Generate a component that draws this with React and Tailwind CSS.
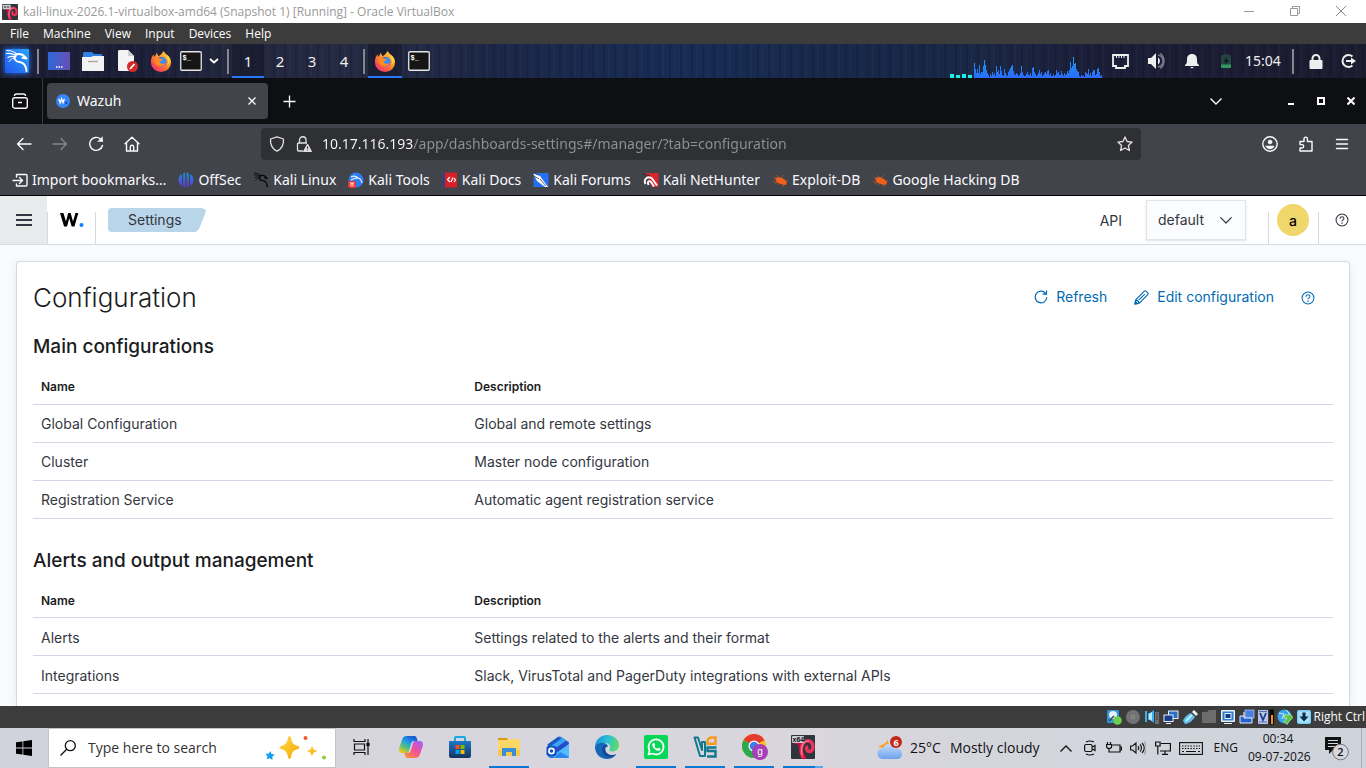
import React from 'react';

const WIN = "font-['Open_Sans',sans-serif]";
const KALI = "font-['Noto_Sans',sans-serif]";

/* ---------- Window chrome icons ---------- */

function VmIcon({ className, label }) {
  return (
    <svg viewBox="0 0 24 24" className={className} aria-hidden="true">
      <rect width="24" height="24" rx="1" fill="#30343d" />
      <path d="M3 8c4-4 7 2 7 7 0 4 2 8 5 8" fill="none" stroke="#b8123c" strokeWidth="4" />
      <path d="M12 23C8 12 12 5 18 6c5 1 5 10 1 10.500-3.500.5-4.500-4-2-5" fill="none" stroke="#e8335c" strokeWidth="3.400" />
      <path d="M11 20C9 12 13 5.500 18 6" fill="none" stroke="#ff8ca2" strokeWidth="1" />
      <rect x="1" y="1" width="12" height="7" rx="1" fill="#c9ccd1" />
      {label ? (
        <text x="1.5" y="7" fontSize="7" fontWeight="700" fontFamily="Liberation Sans" fill="#111">x64</text>
      ) : (
        <path d="M3 3l3 3m0-3L3 6m5-3v3m2-3v3" stroke="#444" strokeWidth="1" />
      )}
    </svg>
  );
}

function Dragon({ color }) {
  return (
    <g fill="none" stroke={color} strokeLinecap="round" strokeLinejoin="round">
      <path d="M2 1.500c4 0 7 1 9.500 3.500M1.500 4.500c4-.5 7 .5 9.500 2M3 8.500c2.500-1.500 5-1.500 8-.5" strokeWidth="1.200" />
      <path d="M11 5.500c3.500-1 6.500-.5 9 2.500l1.500 1.500-4-.8M11 6c-3 3.500-1 6.500 3.500 7 4.500.5 6.500 3.500 7 9" strokeWidth="1.900" />
      <path d="M4 12.500c1.500-2 3-3 5-3.500" strokeWidth="1" />
    </g>
  );
}

function KaliTile({ className }) {
  return (
    <svg viewBox="0 0 26 26" className={className} aria-hidden="true">
      <defs>
        <linearGradient id="kt" x1="0" y1="1" x2="1" y2="0">
          <stop offset="0" stopColor="#2357f0" />
          <stop offset="1" stopColor="#2ba4f8" />
        </linearGradient>
      </defs>
      <rect x="1" y="1" width="24" height="24" rx="1" fill="url(#kt)" />
      <g transform="translate(1 1)"><Dragon color="#fff" /></g>
    </svg>
  );
}

function FirefoxIcon({ className }) {
  return (
    <svg viewBox="0 0 24 24" className={className} aria-hidden="true">
      <defs>
        <linearGradient id="ffx" x1="1" y1="0" x2="0.200" y2="1">
          <stop offset="0" stopColor="#ffe14a" />
          <stop offset="0.450" stopColor="#ff9a2a" />
          <stop offset="0.800" stopColor="#ff4f4f" />
          <stop offset="1" stopColor="#e5317f" />
        </linearGradient>
      </defs>
      <path d="M15 1c1 2 2 3 4 4.500 2.500 2 4 4.500 4 8A11 10.500 0 0 1 1 13.500C1 9 2.500 6.500 4 5l.8 2.500L7.500 3l1.500 3.500C11.500 6 13 3.500 15 1z" fill="url(#ffx)" />
      <circle cx="12.500" cy="13" r="5.500" fill="#5a50dc" />
      <circle cx="13.500" cy="12" r="3.800" fill="#3f8ff5" />
      <path d="M5 9.500c2-1.500 4-1.500 6 0l2.500.7c-.5 1.500-2 1.800-3 2.300.5 3 4 3.500 7 1.500-1 4-5.500 5.500-9 3.500C5 15.500 4 12.500 5 9.500z" fill="#ff8a20" />
      <path d="M16 6c3 2 5 6 3 10 3-2 3.500-6.500.5-9.500z" fill="#ffd83c" />
    </svg>
  );
}

function TerminalIcon() {
  return (
    <svg viewBox="0 0 22 20" className="h-5 w-[22px]" aria-hidden="true">
      <rect x="0.750" y="0.750" width="20.500" height="18.500" rx="1" fill="#151515" stroke="#e6e6e6" strokeWidth="1.300" />
      <text x="2.500" y="9" fontSize="7" fontWeight="700" fontFamily="Liberation Mono" fill="#fff">$_</text>
    </svg>
  );
}

const CPU = [
  15, 9, 5, 9, 5, 13, 4, 6, 6, 12, 18, 13, 8, 5, 3, 1, 4, 2, 6, 3, 5, 2, 12, 6, 8, 4, 12, 7, 3, 2, 9, 5, 3, 2, 6,
  8, 10, 12, 13, 7, 4, 3, 5, 4, 2, 3, 5, 12, 6, 3, 2, 2, 4, 6, 3, 3, 5, 2, 10, 11, 6, 4, 2, 3, 5, 8, 4, 6, 2, 3, 5,
  6, 4, 7, 8, 3, 5, 2, 2, 4, 2, 3, 8, 5, 6, 3, 3, 7, 4, 2, 5, 3, 4, 7, 5, 8, 16, 10, 12, 21, 14, 15, 9, 7, 6, 2, 1,
  3, 2, 2, 1, 6, 5, 4, 9, 3, 5, 2, 6, 8, 8, 3, 4, 9, 10, 6, 2, 3,
];

function CpuGraph() {
  return (
    <svg viewBox="0 0 152 34" className="h-[34px] w-[152px] shrink-0" role="img" aria-label="CPU usage">
      <defs>
        <linearGradient id="cpu" gradientUnits="userSpaceOnUse" x1="0" y1="12" x2="0" y2="34">
          <stop offset="0" stopColor="#19a8e8" />
          <stop offset="0.700" stopColor="#2679f6" />
          <stop offset="1" stopColor="#2a6cff" />
        </linearGradient>
      </defs>
      {[0, 6, 12, 18].map((x, i) => (
        <rect key={x} x={x} y={i % 2 ? 31 : 30} width="4" height={i % 2 ? 3 : 4} fill="#18f0e4" />
      ))}
      {CPU.map((h, i) => (
        <rect key={i} x={24 + i} y={34 - h} width="1" height={h} fill="url(#cpu)" shapeRendering="crispEdges" />
      ))}
    </svg>
  );
}

const Sep = ({ className = 'w-2' }) => (
  <span className={`flex shrink-0 justify-center ${className}`}>
    <span className="h-[25px] w-0.5 bg-[#85868e]" />
  </span>
);

function TitleBar() {
  return (
    <div className={`flex h-[23px] shrink-0 items-center bg-white text-[#999] ${WIN}`}>
      <VmIcon className="ml-0.5 h-4 w-4" />
      <span className="ml-[5px] text-[12px] leading-4 whitespace-nowrap">
        kali-linux-2026.1-virtualbox-amd64 (Snapshot 1) [Running] - Oracle VirtualBox
      </span>
      <div className="mr-0.5 ml-auto flex h-full pb-0.5">
        <button aria-label="Minimize" className="flex w-[46px] items-center justify-center">
          <svg viewBox="0 0 10 10" className="h-2.5 w-2.5"><path d="M0 5.500h10" stroke="#999" /></svg>
        </button>
        <button aria-label="Restore" className="flex w-[46px] items-center justify-center">
          <svg viewBox="0 0 10 10" className="h-2.5 w-2.5" fill="none" stroke="#999"><path d="M.5 2.500h7v7h-7zM2.500 2V.5h7v7H8" /></svg>
        </button>
        <button aria-label="Close" className="flex w-[46px] items-center justify-center">
          <svg viewBox="0 0 10 10" className="h-2.5 w-2.5" stroke="#888"><path d="M0 0l10 10M10 0L0 10" /></svg>
        </button>
      </div>
    </div>
  );
}

function MenuBar() {
  return (
    <nav className={`flex h-[21px] shrink-0 items-center gap-3.5 bg-[#3c3c3d] pl-2.5 text-[12px] leading-4 text-white ${WIN}`}>
      {['File', 'Machine', 'View', 'Input', 'Devices', 'Help'].map((m) => (
        <button key={m}>{m}</button>
      ))}
    </nav>
  );
}

function PanelCell({ w, label, children, className = '' }) {
  return (
    <button aria-label={label} className={`flex h-full shrink-0 items-center justify-center ${w} ${className}`}>
      {children}
    </button>
  );
}

function KaliPanel() {
  return (
    <div
      className={`flex h-[34px] shrink-0 items-center bg-[repeating-linear-gradient(90deg,transparent_0_3px,rgba(60,110,130,0.10)_3px_4px,transparent_4px_9px,rgba(10,10,30,0.18)_9px_11px),linear-gradient(90deg,#1d1f33_0%,#1c1f38_10%,#23273d_16%,#252b44_28%,#1c2747_36%,#182c55_50%,#182849_62%,#1a2745_72%,#1c1e38_80%,#1c1c2f_100%)] text-[#eee] ${KALI}`}
    >
      <PanelCell w="w-[34px]" label="Applications"><KaliTile className="h-[26px] w-[26px] drop-shadow-[0_0_3px_#2777ff]" /></PanelCell>
      <Sep />
      <PanelCell w="w-[34px]" label="Show desktop">
        <svg viewBox="0 0 22 18" className="h-[18px] w-[22px]">
          <defs><linearGradient id="dsk"><stop stopColor="#3167d8" /><stop offset="1" stopColor="#6550b4" /></linearGradient></defs>
          <rect width="22" height="18" rx="1" fill="url(#dsk)" />
          <path d="M8 15h1.500m1 0h1.500m1 0h1.500" stroke="#fff" strokeWidth="1.500" />
        </svg>
      </PanelCell>
      <PanelCell w="w-[34px]" label="File manager">
        <svg viewBox="0 0 22 21" className="h-[21px] w-[22px]">
          <path d="M2 1h8l2 2h7a1 1 0 0 1 1 1v6H1V2z" fill="#3080e8" />
          <path d="M0 6h9l2-1h11v15H0z" fill="#f2f2f2" />
          <path d="M6 10.500h10" stroke="#aaa" strokeWidth="1.500" />
        </svg>
      </PanelCell>
      <PanelCell w="w-[34px]" label="Text editor">
        <svg viewBox="0 0 22 22" className="h-[22px] w-[22px]">
          <path d="M3 0h9l6 6v15H3a1 1 0 0 1-1-1V1z" fill="#f4f4f4" />
          <path d="M12 0l6 6h-6z" fill="#cfcfcf" />
          <circle cx="16.500" cy="16.500" r="5.500" fill="#d42a2a" />
          <path d="M14 19l4.500-5" stroke="#fff" strokeWidth="1.800" />
        </svg>
      </PanelCell>
      <PanelCell w="w-[34px]" label="Firefox"><FirefoxIcon className="h-[22px] w-[22px]" /></PanelCell>
      <PanelCell w="w-[26px]" label="Terminal"><TerminalIcon /></PanelCell>
      <PanelCell w="w-5" label="More terminals">
        <svg viewBox="0 0 10 6" className="h-1.5 w-2.5" fill="none" stroke="#fff" strokeWidth="1.800"><path d="M1 1l4 3.500L9 1" /></svg>
      </PanelCell>
      <Sep />
      {['1', '2', '3', '4'].map((n) => (
        <button
          key={n}
          className={n === '1'
            ? 'h-full w-8 border-b-2 border-[#2777ff] bg-[#15182a]/60 pt-0.5 text-[15px]'
            : 'h-full w-8 border-b-2 border-transparent pt-0.5 text-[15px]'}
        >
          {n}
        </button>
      ))}
      <Sep />
      <PanelCell w="w-[34px]" label="Firefox window" className="border-b-2 border-[#2777ff] bg-[#15182a]/60 pt-0.5"><FirefoxIcon className="h-[22px] w-[22px]" /></PanelCell>
      <PanelCell w="w-[34px]" label="Terminal window"><TerminalIcon /></PanelCell>

      <div className="ml-auto flex h-full items-center">
        <CpuGraph />
        <PanelCell w="w-9" label="Network">
          <svg viewBox="0 0 17 15" className="h-[15px] w-[17px]" fill="none" stroke="#eee" strokeWidth="1.800">
            <path d="M1 1h15v11h-3v2H4v-2H1z" /><path d="M4.500 2v2M7 2v2M9.500 2v2M12 2v2" strokeWidth="1" />
          </svg>
        </PanelCell>
        <PanelCell w="w-9" label="Volume">
          <svg viewBox="0 0 17 16" className="h-4 w-[17px]">
            <path d="M0 5h3l5-5v16l-5-5H0z" fill="#eee" /><path d="M10 4.500c2.500 1.500 2.500 5.500 0 7z" fill="#eee" />
            <path d="M10 2c4 1 5 4 5 6s-1 5-5 6M12 .5c3 2 4 4.500 4 7.500s-1 5.500-4 7.500" fill="none" stroke="#777986" strokeWidth="1.500" />
          </svg>
        </PanelCell>
        <PanelCell w="w-9" label="Notifications">
          <svg viewBox="0 0 14 16" className="h-4 w-3.5" fill="#eee">
            <path d="M7 1c3.500 0 5 2.500 5 5 0 4 .5 5 2 6v1H0v-1c1.500-1 2-2 2-6 0-2.500 1.500-5 5-5zM5 14h4l-2 1.500z" />
          </svg>
        </PanelCell>
        <PanelCell w="w-8" label="Battery">
          <svg viewBox="0 0 10 14" className="h-3.5 w-2.5">
            <path d="M3 0h4v1h2a1 1 0 0 1 1 1v9H0V2a1 1 0 0 1 1-1h2z" fill="#24443f" />
            <path d="M0 10.500h10V13a1 1 0 0 1-1 1H1a1 1 0 0 1-1-1z" fill="#2f9a62" /><path d="M6 3L2.500 7.500H5L4 11l4-5H5.500z" fill="#10181c" />
          </svg>
        </PanelCell>
        <span className="w-[42px] text-center text-[14px] leading-5">15:04</span>
        <Sep className="w-[18px]" />
        <PanelCell w="w-7" label="Lock screen">
          <svg viewBox="0 0 14 15" className="h-[15px] w-3.5"><path d="M3.500 7V4.500a3.500 3.500 0 0 1 7 0V7" fill="none" stroke="#eee" strokeWidth="2" /><rect x="0.500" y="6" width="13" height="9" rx="1" fill="#eee" /></svg>
        </PanelCell>
        <PanelCell w="w-9" label="Log out">
          <svg viewBox="0 0 16 16" className="h-4 w-4"><path d="M12.500 3.500a6 6 0 1 0 0 9" fill="none" stroke="#eee" strokeWidth="2" /><path d="M6 8h6" stroke="#eee" strokeWidth="2" /><path d="M11 4.500L16 8l-5 3.500z" fill="#eee" /></svg>
        </PanelCell>
      </div>
    </div>
  );
}

/* ---------- Firefox ---------- */

function TabBar() {
  return (
    <div className="flex h-[46px] shrink-0 items-center bg-[#0e0f13] text-[#fbfbfe]">
      <button aria-label="Recent browsing" className="flex h-full w-[43px] items-center justify-center border-r border-[#3a3b40] pr-0.5">
        <svg viewBox="0 0 16 16" className="h-4 w-4" fill="none" stroke="#f4f4f6" strokeWidth="1.400">
          <rect x="0.700" y="4.700" width="14.600" height="10.500" rx="2" /><path d="M2.500 3c0-1.500.5-2 2-2h7c1.500 0 2 .5 2 2M6 9.500h4" />
        </svg>
      </button>
      <div className="ml-1 flex h-9 w-[221px] items-center rounded bg-[#42444c] pl-[9px]">
        <svg viewBox="0 0 14 14" className="h-3.5 w-3.5">
          <circle cx="7" cy="7" r="7" fill="#3585f9" />
          <path d="M2.800 4.800l1.400 4 1.400-4 1.400 4 1.400-4" fill="none" stroke="#fff" strokeWidth="1.300" /><circle cx="10.500" cy="8.800" r="0.900" fill="#0a2a60" />
        </svg>
        <span className={`ml-[7px] text-[14px] leading-5 ${KALI}`}>Wazuh</span>
        <button aria-label="Close tab" className="mr-[11px] ml-auto flex h-5 w-2.5 items-center">
          <svg viewBox="0 0 8 8" className="mx-auto h-2 w-2" stroke="#fbfbfe" strokeWidth="1.300"><path d="M.5.5l7 7m0-7l-7 7" /></svg>
        </button>
      </div>
      <button aria-label="New tab" className="ml-[15px]">
        <svg viewBox="0 0 13 13" className="h-[13px] w-[13px]" stroke="#fbfbfe" strokeWidth="1.300"><path d="M6.500.5v12M.5 6.500h12" /></svg>
      </button>
      <div className="ml-auto flex items-center">
        <button aria-label="List all tabs" className="mr-[54px]">
          <svg viewBox="0 0 12 7" className="h-[7px] w-3" fill="none" stroke="#fbfbfe" strokeWidth="1.400"><path d="M.5.5L6 6 11.500.5" /></svg>
        </button>
        <button aria-label="Minimize window" className="flex w-[30px] justify-center"><svg viewBox="0 0 8 8" className="h-2 w-2"><path d="M1 7h6" stroke="#fff" strokeWidth="2" /></svg></button>
        <button aria-label="Maximize window" className="flex w-[30px] justify-center"><svg viewBox="0 0 8 8" className="h-2 w-2"><rect x="1" y="1" width="6" height="6" fill="none" stroke="#fff" strokeWidth="2" /></svg></button>
        <button aria-label="Close window" className="flex w-[30px] justify-center"><svg viewBox="0 0 8 8" className="h-2 w-2" stroke="#fff" strokeWidth="2"><path d="M.5.5l7 7m0-7l-7 7" /></svg></button>
      </div>
    </div>
  );
}

function ToolButton({ label, children, dim }) {
  return (
    <button aria-label={label} className={`flex w-9 items-center justify-center ${dim ? 'text-[#85868c]' : 'text-[#fbfbfe]'}`}>
      <svg viewBox="0 0 16 16" className="h-4 w-4" fill="none" stroke="currentColor" strokeWidth="1.400" strokeLinejoin="round" strokeLinecap="round">{children}</svg>
    </button>
  );
}

function NavToolbar() {
  return (
    <div className={`flex h-10 shrink-0 items-center bg-[#42444c] px-1.5 ${KALI}`}>
      <ToolButton label="Back"><path d="M15 8H1.500M7 2.500L1.500 8 7 13.500" /></ToolButton>
      <ToolButton label="Forward" dim><path d="M1 8h13.500M9 2.500L14.500 8 9 13.500" /></ToolButton>
      <ToolButton label="Reload"><path d="M14.500 9.500A6.500 6.500 0 1 1 12.500 3l2 2" /><path d="M14.500 1v4.500H10z" fill="currentColor" strokeWidth="0.500" /></ToolButton>
      <ToolButton label="Home"><path d="M1 7.800L8 1.200l7 6.600M2.500 7v8h11V7M6.300 15v-4a1.700 1.700 0 0 1 3.400 0v4" /></ToolButton>
      <div className="mx-[111px] flex h-8 flex-1 items-center rounded bg-[#2f3034] pl-2">
        <svg viewBox="0 0 16 16" className="h-4 w-4" fill="none" stroke="#e2e2e6" strokeWidth="1.300" strokeLinejoin="round"><path d="M8 .8L14.500 3c.3 5-1 9.500-6.500 12.200C2.500 12.500 1.200 8 1.500 3z" /></svg>
        <svg viewBox="0 0 16 16" className="ml-[11px] h-4 w-4" fill="none" stroke="#e2e2e6" strokeWidth="1.300" strokeLinejoin="round">
          <path d="M3.500 7V4a3 3 0 0 1 6.500 0v3M7 15H2.500a1 1 0 0 1-1-1V8a1 1 0 0 1 1-1H11" />
          <path d="M11.500 8l4 7.500h-8z" fill="#e2e2e6" strokeWidth="1" /><path d="M11.500 10.500v2.300m0 .9v.8" stroke="#2f3034" strokeWidth="1.200" />
        </svg>
        <input
          aria-label="Address"
          readOnly
          value="10.17.116.193/app/dashboards-settings#/manager/?tab=configuration"
          className="ml-2.5 min-w-0 flex-1 bg-[linear-gradient(90deg,#fbfbfe_91px,#909196_91px)] bg-clip-text text-[14px] leading-6 text-transparent outline-none"
        />
        <button aria-label="Bookmark this page" className="mr-2">
          <svg viewBox="0 0 16 16" className="h-4 w-4" fill="none" stroke="#e2e2e6" strokeWidth="1.300" strokeLinejoin="round"><path d="M8 .9l2.100 4.600 5 .6-3.700 3.400 1 5L8 12l-4.400 2.500 1-5L.9 6.100l5-.6z" /></svg>
        </button>
      </div>
      <ToolButton label="Account"><circle cx="8" cy="8" r="7.200" /><circle cx="8" cy="6" r="2" fill="currentColor" strokeWidth="0.500" /><path d="M4 10h8c-.5 2-2 3-4 3s-3.500-1-4-3z" fill="currentColor" strokeWidth="0.500" /></ToolButton>
      <ToolButton label="Extensions"><path d="M2 5.500h4V2.800a1.700 1.700 0 0 1 3.400 0v2.700H14V15H2v-3h2a1.600 1.600 0 0 0 0-3.400H2z" /></ToolButton>
      <ToolButton label="Menu"><path d="M2.500 3.500h11M2.500 8h11M2.500 12.500h11" /></ToolButton>
    </div>
  );
}

const Bug = () => (
  <svg viewBox="0 0 16 16" className="h-4 w-4">
    <g fill="none" stroke="#b8501c" strokeWidth="0.900"><path d="M2 5.500l4 2M5 3l2 4M10 5l2-2M1 10l5-1M6 13l2-2M11 13l1 2M13 9l3 0M3 12l3-2" /></g>
    <path d="M3 6l5-1 4 2 3 3-1 3-4-.5-5-2z" fill="#ef5f1d" />
  </svg>
);

const BOOKMARKS = [
  ['Import bookmarks…', <svg key="i" viewBox="0 0 16 16" className="h-4 w-4" fill="none" stroke="#fbfbfe" strokeWidth="1.400" strokeLinecap="round" strokeLinejoin="round"><path d="M1 8.500h9M7.500 5.500l3 3-3 3M4.500 5V2.500H14a1 1 0 0 1 1 1V13a1 1 0 0 1-1 1H4.500V12" /></svg>],
  ['OffSec', <svg key="o" viewBox="0 0 16 16" className="h-4 w-4"><defs><linearGradient id="ofs" x1="0" y1="0" x2="0" y2="1"><stop stopColor="#1d8fc8" /><stop offset="0.500" stopColor="#3c62d8" /><stop offset="1" stopColor="#6a2fd0" /></linearGradient></defs><path d="M7.300.5v15c-1.200 0-2.200-.6-2.200-2V2.500c0-1.400 1-2 2.200-2zM8.700.5v15c1.200 0 2.200-.6 2.200-2V2.500c0-1.400-1-2-2.200-2zM4 2v12C2 13 .5 11 .5 8S2 3 4 2zM12 2v12c2-1 3.500-3 3.500-6S14 3 12 2z" fill="url(#ofs)" /></svg>],
  ['Kali Linux', <svg key="k" viewBox="0 0 24 24" className="h-4 w-4"><Dragon color="#08080a" /></svg>],
  ['Kali Tools', <svg key="t" viewBox="0 0 16 16" className="h-4 w-4"><circle cx="8" cy="8" r="7.500" fill="#2f7cf0" /><path d="M3 5c3-1.500 5-1 7 1 3 .5 3.500 3 4 5M3 8c3-2 5-2 7-2" fill="none" stroke="#e8f0ff" strokeWidth="1.200" /><rect x="0" y="9" width="8" height="7" rx="2" fill="#e33" /><path d="M2 11h4M3 11v3.500M5 11v3.500" stroke="#fff" strokeWidth="0.900" /></svg>],
  ['Kali Docs', <svg key="d" viewBox="0 0 16 16" className="h-4 w-4"><rect x="1" y="0.500" width="14" height="15" fill="#d81f26" /><path d="M1 .5h2v15H1z" fill="#2a3f8f" /><path d="M8 5L5.500 7.500 8 10M11 5.500L9 10M12 6l1.500 2-1.500 2" fill="none" stroke="#fff" strokeWidth="1.200" /></svg>],
  ['Kali Forums', <svg key="f" viewBox="0 0 16 16" className="h-4 w-4"><rect x="0.500" y="1" width="15" height="14" fill="#2470f2" /><path d="M0 1l7 3 8 11h-3L4 9z" fill="#fff" /><path d="M0 1l6 2M1 4l5 3M7 7l6 7" stroke="#223" strokeWidth="0.700" /></svg>],
  ['Kali NetHunter', <svg key="n" viewBox="0 0 16 16" className="h-4 w-4"><path d="M2 1h13.500v14H9z" fill="#d9262e" /><path d="M2.500 12C0 7 5 3.500 9 6.500l5 7M5.500 13C4 9.500 6 8 8 10l3 4.500" fill="none" stroke="#fff" strokeWidth="1.900" /><path d="M0 2l7 2" stroke="#222" strokeWidth="0.900" /></svg>],
  ['Exploit-DB', <Bug key="e" />],
  ['Google Hacking DB', <Bug key="g" />],
];

function BookmarksBar() {
  return (
    <div className={`flex h-8 shrink-0 items-center gap-3 border-b border-black bg-[#42444c] pl-3 text-[14px] leading-5 text-[#fbfbfe] ${KALI}`}>
      {BOOKMARKS.map(([name, icon]) => (
        <a key={name} href="#" className="flex items-center gap-1 whitespace-nowrap">{icon}<span>{name}</span></a>
      ))}
    </div>
  );
}

/* ---------- Wazuh dashboard ---------- */

function HelpIcon() {
  return (
    <svg viewBox="0 0 16 16" className="h-3.5 w-3.5" fill="none" stroke="currentColor" strokeWidth="1.200">
      <circle cx="8" cy="8" r="6.800" /><path d="M5.800 6.500c0-1.500 1-2.200 2.200-2.200s2.200.7 2.200 2c0 1.700-2.200 1.500-2.200 3.200" /><path d="M8 10.800v1.400" strokeWidth="1.500" />
    </svg>
  );
}

const Rule = () => <span className="h-8 w-px shrink-0 self-end bg-[#d3dae6]" />;

function AppHeader() {
  return (
    <header className="flex h-[49px] shrink-0 items-center border-b border-[#d3dae6] bg-white text-[#343741]">
      <button aria-label="Toggle navigation" className="flex h-full w-[47px] items-center justify-center bg-[#e9eaec]">
        <svg viewBox="0 0 16 12" className="h-3 w-4" stroke="#343741" strokeWidth="1.800"><path d="M0 1h16M0 6h16M0 11h16" /></svg>
      </button>
      <Rule />
      <a href="#" aria-label="Wazuh home" className="flex w-[47px] items-center justify-center">
        <svg viewBox="0 0 24 14" className="h-3.5 w-6">
          <path d="M0 0h3.600l2.700 8.600L8.600 0h2.600l2.500 8.600L16.300 0h3L15.200 13.500h-2.900L9.800 5.200 7.400 13.500H4.300z" fill="#000" transform="scale(.95 1)" />
          <circle cx="21.500" cy="12" r="2" fill="#0a80ff" />
        </svg>
      </a>
      <Rule />
      <span className="ml-3 flex h-6 w-[98px] items-center rounded-l-[4px] bg-[#b8d5e9] pb-px pl-5 text-[14px] [clip-path:polygon(0_0,94px_0,98px_2px,97px_6px,91px_21px,88px_24px,0_24px)]">Settings</span>
      <label htmlFor="api" className="mr-6 ml-auto text-[14px]">API</label>
      <div className="relative mr-[22px]">
        <select id="api" className="h-10 w-[100px] appearance-none border border-[#e0e5ee] bg-[#fbfcfd] pb-px pl-[11px] text-[14px] shadow-[0_1px_2px_rgba(130,140,170,0.25)] outline-none">
          <option>default</option>
        </select>
        <svg viewBox="0 0 12 7" className="pointer-events-none absolute top-[17px] right-[14px] h-[7px] w-3" fill="none" stroke="#343741" strokeWidth="1.200" strokeLinecap="round" strokeLinejoin="round"><path d="M.7.7L6 6 11.300.7" /></svg>
      </div>
      <Rule />
      <button aria-label="Account" className="mx-2 flex h-8 w-8 items-center justify-center rounded-full bg-[#f0d76b] text-[14px] font-medium text-black">a</button>
      <span className="w-px" />
      <Rule />
      <button aria-label="Help" className="flex w-[47px] items-center justify-center pr-px"><HelpIcon /></button>
    </header>
  );
}

function ConfigSection({ title, rows }) {
  return (
    <section>
      <h2 className="mb-3 text-[19px] leading-6 font-medium text-[#1a1c21]">{title}</h2>
      <table className="w-full border-collapse text-left text-[14px] leading-5 text-[#343741]">
        <thead>
          <tr className="h-[33px] border-b border-[#d3d6e4] text-[12px] text-[#1a1c21]">
            <th className="w-1/3 px-2 font-semibold">Name</th>
            <th className="px-2 font-semibold">Description</th>
          </tr>
        </thead>
        <tbody>
          {rows.map(([name, description]) => (
            <tr key={name} className="h-[38px] border-b border-[#d3d6e4]">
              <td className="px-2 pt-0.5">{name}</td>
              <td className="px-2 pt-0.5">{description}</td>
            </tr>
          ))}
        </tbody>
      </table>
    </section>
  );
}

function Dashboard() {
  return (
    <div className="flex min-h-0 flex-1 flex-col overflow-hidden bg-[#fafbfd] font-[Inter,sans-serif]">
      <AppHeader />
      <main className="mx-4 mt-4 flex-1 rounded-t border border-b-0 border-[#d3dae6] bg-white px-4 pt-4 shadow-[0_2px_8px_rgba(100,110,140,0.12)]">
        <div className="mb-[17px] flex h-10 items-center text-[14px] leading-5 text-[#006bb4]">
          <h1 className="text-[26px] leading-10 font-light text-[#1a1c21]">Configuration</h1>
          <button className="ml-auto flex items-center gap-2 pb-0.5">
            <svg viewBox="0 0 14 14" className="h-3.5 w-3.5" fill="none" stroke="currentColor" strokeWidth="1.200" strokeLinecap="round"><path d="M12.800 7.500A5.800 5.800 0 1 1 11.500 3.300M12.500.8v3.400H9" /></svg>
            Refresh
          </button>
          <button className="ml-[27px] flex items-center gap-2 pb-0.5">
            <svg viewBox="0 0 16 16" className="h-[15px] w-[15px]" fill="none" stroke="currentColor" strokeWidth="1.200" strokeLinejoin="round"><path d="M1 15l.8-4.500L11 1.300c.6-.6 1.400-.5 2 .1l1.600 1.600c.6.6.6 1.300 0 1.900L5.500 14.200zM1.800 10.500c1.800.3 3.300 1.900 3.700 3.700M5 10.800l6.500-6.500" /><path d="M1 15l.5-2.800 2.300 2.300z" fill="currentColor" /></svg>
            Edit configuration
          </button>
          <button aria-label="Help" className="mr-[18px] ml-[27px]"><HelpIcon /></button>
        </div>
        <div className="flex flex-col gap-[30px]">
          <ConfigSection
            title="Main configurations"
            rows={[
              ['Global Configuration', 'Global and remote settings'],
              ['Cluster', 'Master node configuration'],
              ['Registration Service', 'Automatic agent registration service'],
            ]}
          />
          <ConfigSection
            title="Alerts and output management"
            rows={[
              ['Alerts', 'Settings related to the alerts and their format'],
              ['Integrations', 'Slack, VirusTotal and PagerDuty integrations with external APIs'],
            ]}
          />
        </div>
      </main>
    </div>
  );
}

/* ---------- VirtualBox status bar ---------- */

const STATUS_ICONS = [
  <g key="1"><rect x="1" y="1" width="12" height="13" rx="1" fill="#2f96dc" /><circle cx="7" cy="6" r="4" fill="#e4f3fc" /><path d="M3 12l5-5" stroke="#345" strokeWidth="1.500" /><circle cx="11.500" cy="11.500" r="4.300" fill="#6cd04a" /></g>,
  <g key="2"><circle cx="8" cy="8" r="7" fill="#737374" /><circle cx="8" cy="8" r="2" fill="#9a9a9a" /><circle cx="8" cy="8" r="0.800" fill="#3c3c3d" /></g>,
  <g key="3"><path d="M1 2h2v11H1zM4 4h2l4-3v13l-4-3H4z" fill="#3cb0ee" /><path d="M5 5l3-2v9L5 10z" fill="#bfe6fb" /><path d="M11 3h4v12h-4z" fill="#6c7175" /><path d="M12 5h2M12 7.500h2M12 10h2" stroke="#3c3c3d" /></g>,
  <g key="4"><rect x="5.500" y="2" width="9.500" height="7.500" fill="#2d6fc0" stroke="#e4edf8" /><rect x="1" y="6" width="9" height="6.500" fill="#173d88" stroke="#e4edf8" /><path d="M3 14.500h5" stroke="#e4edf8" /></g>,
  <g key="5"><path d="M1 12c1-4 5-7 8-8l4 4c-2 3-6 7-10 7z" fill="#5fc0f3" /><path d="M4 12l6-6" stroke="#e8f7ff" strokeWidth="1.500" /><path d="M10 3l2-2 4 4-2 2z" fill="#f2f2f2" /></g>,
  <g key="6"><path d="M1 3h5l2-2h7v13H1z" fill="#6c6c6d" /></g>,
  <g key="7"><rect x="1" y="1" width="14" height="12" rx="1" fill="#e6f2fc" /><rect x="2.500" y="2.500" width="11" height="9" fill="#2b7bc8" /><rect x="5" y="4.500" width="6" height="5" fill="#0f3c80" stroke="#e6f2fc" /><path d="M4 14.500h8" stroke="#e6f2fc" /></g>,
  <g key="8"><rect x="6" y="1" width="9" height="8" fill="#4a80e0" stroke="#bcd2fa" strokeWidth="0.700" /><path d="M1 7h4v2h8v5H1z" fill="#2560d0" stroke="#e4edfb" /><path d="M5 3v5" stroke="#fff" /></g>,
  <g key="9"><rect x="0" y="1" width="10" height="14" rx="1" fill="#b9c6e6" /><path d="M2 4l3 7 3-7" fill="none" stroke="#1d3c90" strokeWidth="1.800" /><path d="M1 13h8M1 2.500h8" stroke="#3c54b0" strokeWidth="0.800" /><rect x="11.500" y="0.500" width="4.500" height="15" fill="#0b0b0b" /><rect x="13" y="6" width="2" height="9" fill="#ff8a1c" /></g>,
  <g key="10"><circle cx="7.500" cy="7.500" r="7" fill="#3aa5e8" /><path d="M2 4l5 1-2 5M9 1l3 3" stroke="#cdeafc" fill="none" /><path d="M7 6h5v-2l4 4.500-4 4-2 3-3-3 3-3.500H7z" fill="#5cc63c" stroke="#e9ffe0" strokeWidth="0.600" /></g>,
  <g key="11"><rect x="1" y="1" width="14" height="14" rx="2" fill="#7cd0f8" /><rect x="2.500" y="2.500" width="11" height="11" rx="1" fill="#a8e0fb" /><path d="M6.500 3.500h3v4h3L8 12.500 3.500 7.500h3z" fill="#0c2c4c" /></g>,
];

function StatusBar() {
  return (
    <div className={`flex h-[22px] shrink-0 items-center justify-end bg-[#3c3c3d] pr-px text-white ${WIN}`}>
      <div className="mr-0.5 flex gap-[3px]">
        {STATUS_ICONS.map((icon, i) => (
          <svg key={i} viewBox="0 0 16 16" className="h-4 w-4">{icon}</svg>
        ))}
      </div>
      <span className="text-[12px] leading-4 whitespace-nowrap">Right Ctrl</span>
    </div>
  );
}

/* ---------- Windows taskbar ---------- */

const APPS = [
  ['Task View', 'none', <svg key="a" viewBox="0 0 18 16" className="h-4 w-[18px]" fill="none" stroke="#111" strokeWidth="1.200"><path d="M1 0v2.500h11V0M1 16v-2.500h11V16M1.500 5h10v6h-10zM15 0v4M15 7v9" /><rect x="14" y="4.500" width="2" height="2" fill="#111" /></svg>],
  ['Copilot', 'none', (
    <svg key="b" viewBox="0 0 24 22" className="h-[22px] w-6">
      <defs>
        <linearGradient id="cp1" x1="0.800" y1="0" x2="0.200" y2="1"><stop stopColor="#1b4fd0" /><stop offset="0.400" stopColor="#1c9be6" /><stop offset="0.700" stopColor="#5bc27a" /><stop offset="1" stopColor="#f2c714" /></linearGradient>
        <linearGradient id="cp2" x1="0.800" y1="0" x2="0.200" y2="1"><stop stopColor="#a860f0" /><stop offset="0.500" stopColor="#f0509a" /><stop offset="1" stopColor="#ff8a3c" /></linearGradient>
      </defs>
      <path d="M8 0h7c2 0 2.500 1 3 3l.6 2H15c-2 0-2.500 1.500-3 3l-2 7c-.5 1.500-1 2-2.500 2H3c-3 0-3.500-3-2.500-6L3 4c.8-2.500 2-4 5-4z" fill="url(#cp1)" />
      <path d="M16 22H9c-2 0-2.500-1-3-3l-.6-2H9c2 0 2.500-1.500 3-3l2-7c.5-1.500 1-2 2.500-2H21c3 0 3.500 3 2.500 6L21 18c-.8 2.500-2 4-5 4z" fill="url(#cp2)" />
    </svg>
  )],
  ['Microsoft Store', 'none', <svg key="c" viewBox="0 0 24 24" className="h-6 w-6"><defs><linearGradient id="st" x1="0" y1="0" x2="0" y2="1"><stop stopColor="#1c78c8" /><stop offset="1" stopColor="#17335f" /></linearGradient></defs><path d="M7 7V3a1 1 0 0 1 1-1h8a1 1 0 0 1 1 1v4" fill="none" stroke="#1aa8e4" strokeWidth="2" /><path d="M1 6h22v15a2 2 0 0 1-2 2H3a2 2 0 0 1-2-2z" fill="url(#st)" /><path d="M7.500 10h4v4h-4z" fill="#f25022" /><path d="M12.500 10h4v4h-4z" fill="#7fba00" /><path d="M7.500 15h4v4h-4z" fill="#00a4ef" /><path d="M12.500 15h4v4h-4z" fill="#ffb900" /></svg>],
  ['File Explorer', 'full', <svg key="d" viewBox="0 0 24 22" className="h-[22px] w-6"><path d="M1 2h9l1 2H1z" fill="#d99a10" /><path d="M1 4h9l2-1h10a1 1 0 0 1 1 1v15H1z" fill="#fcd667" /><path d="M1 14h22v6H1z" fill="#f8c84c" /><path d="M5 12h14v8h-4v-4H9v4H5z" fill="#3a8fd4" /></svg>],
  ['Outlook', 'none', <svg key="e" viewBox="0 0 24 24" className="h-6 w-6"><path d="M2 9L12 2c1-.6 2-.6 3 0l8 5v14a2 2 0 0 1-2 2H5a3 3 0 0 1-3-3z" fill="#2878e0" /><path d="M1 10L12 2l4 2L4 12z" fill="#1c58c4" /><path d="M4 12L16 3l4 2.500L7 15z" fill="#3ba4f4" /><path d="M7 15L20 6l3 3-14 9z" fill="#2a48c8" /><path d="M8 20L23 9v12a2 2 0 0 1-2 2H8z" fill="#52bdfa" /><path d="M14 17l9 5a2 2 0 0 1-2 1H8z" fill="#2c84ee" /><rect x="0.500" y="11" width="10" height="10" rx="2" fill="#124fc0" /><circle cx="5.500" cy="16" r="2.600" fill="none" stroke="#fff" strokeWidth="1.600" /></svg>],
  ['Edge', 'none', (
    <svg key="f" viewBox="0 0 24 24" className="h-6 w-6">
      <defs><linearGradient id="eg" x1="0" y1="0.300" x2="1" y2="0.500"><stop stopColor="#1a8fd8" /><stop offset="0.500" stopColor="#2cc0d8" /><stop offset="1" stopColor="#5fdc62" /></linearGradient></defs>
      <path d="M0 12C0 5 5.500 0 12 0s12 4.500 12 10c0 4-3 6.500-6.500 6.500-2.500 0-3.500-1-3-2 1-1.500 1.500-5.500-3.500-6.500C6 7.500 1 9 0 12z" fill="url(#eg)" />
      <path d="M0 12c1-3 5-5 9-4 2.500.6 4 2 4 4 0-1-6 1-3.500 6 2 4 7 4.500 12 1-2 3-5.500 5-9.500 5C5 24 0 18.500 0 12z" fill="#1568b8" />
      <path d="M9.500 10C6 12 6 19 11.500 21.500c4 1.500 7.500.5 10-2.500-5 2.500-10 .5-11-3.500-.5-2 0-3.500 1-4.500z" fill="#144a94" />
    </svg>
  )],
  ['WhatsApp', 'full', <svg key="g" viewBox="0 0 24 24" className="h-6 w-6"><rect width="24" height="24" rx="2" fill="#07d757" /><path d="M4.500 19.500l1-4A7.500 7.500 0 1 1 8.500 18.500z" fill="none" stroke="#fff" strokeWidth="1.700" strokeLinejoin="round" /><path d="M9 8l1.200-.3 1 2.300-.8 1.200c.8 1.300 1.600 2 3 2.600l1-1 2.200 1c0 1.500-1.400 2.200-2.600 2C11 15.200 8.500 12.500 8.200 10c0-.8.300-1.500.8-2z" fill="#fff" /></svg>],
  ['VirtualBox', 'full', <svg key="h" viewBox="0 0 24 22" className="h-[22px] w-6" fill="none"><path d="M1.500 1.500h3.500l4 12.500V6h3v14H7z" stroke="#117a8c" strokeWidth="2" strokeLinejoin="round" /><path d="M14.500 7.800V6c0-3 1.500-4.500 4-4.500h4v6.300z" stroke="#f59a1c" strokeWidth="2.400" /><path d="M23.500 11.500h-9v3.500h8v5.500h-8.500" stroke="#117a8c" strokeWidth="2.400" /></svg>],
  ['Chrome', 'full', (
    <svg key="i" viewBox="0 0 26 26" className="ml-0.5 h-[26px] w-[26px]">
      <circle cx="12" cy="12" r="12" fill="#fbc116" /><path d="M12 12L1.600 6A12 12 0 0 1 22.400 6z" fill="#e33b2e" /><path d="M1.600 6L12 12v12A12 12 0 0 1 1.600 6z" fill="#2da94f" /><path d="M12 6.500h10.700L22.400 6z" fill="#e33b2e" />
      <circle cx="12" cy="12" r="5.500" fill="#fff" /><circle cx="12" cy="12" r="4.300" fill="#3b7ded" />
      <circle cx="18" cy="18" r="8" fill="#a43fb5" /><text x="18" y="21" textAnchor="middle" fontSize="10" fontFamily="Liberation Sans" fill="#fff">g</text>
    </svg>
  )],
  ['Kali VM', 'split', <VmIcon key="j" label className="h-6 w-6" />],
];

function Taskbar() {
  return (
    <footer className={`flex h-10 shrink-0 bg-[linear-gradient(90deg,#d0d2dc,#d7d5dd_30%,#d9d6dd_60%,#d2d5dd_80%,#cdd3da)] text-[#111] ${WIN}`}>
      <button aria-label="Start" className="flex w-12 shrink-0 items-center justify-center">
        <svg viewBox="0 0 16 16" className="h-4 w-4" fill="#000"><path d="M0 2.300L6.500 1.400v6.200H0zM7.300 1.300L16 0v7.600H7.300zM0 8.400h6.500v6.200L0 13.700zM7.300 8.400H16V16l-8.700-1.300z" /></svg>
      </button>
      <div className="mr-px flex w-[288px] shrink-0 items-center border border-[#c4c4c8] bg-white pr-2 pl-[11px]">
        <svg viewBox="0 0 16 16" className="h-4 w-4" fill="none" stroke="#111" strokeWidth="1.300"><circle cx="10.300" cy="5.700" r="5" /><path d="M6.700 9.300L.5 15.500" /></svg>
        <input aria-label="Search" placeholder="Type here to search" className="ml-3 w-0 flex-1 text-[14px] leading-5 outline-none placeholder:text-[#333]" />
        <svg viewBox="0 0 62 26" className="h-[26px] w-[62px]" aria-hidden="true">
          <defs><linearGradient id="spk" x1="0" y1="0" x2="1" y2="1"><stop stopColor="#ffd84a" /><stop offset="1" stopColor="#f5a900" /></linearGradient></defs>
          <path d="M24.500 1c1 0 1.300 1 2 4 1 3 1.500 4 5 5.500 4 1.500 4 2.500 0 4-3.500 1.500-4 2.500-5 5.500-.7 3-1 4-2 4s-1.300-1-2-4c-1-3-1.500-4-5-5.500-4-1.500-4-2.500 0-4 3.500-1.500 4-2.500 5-5.500.7-3 1-4 2-4z" fill="url(#spk)" />
          <path d="M47 10.500c1.200 4 1.500 4.300 5.500 5.500-4 1.200-4.300 1.500-5.500 5.500-1.200-4-1.500-4.300-5.500-5.500 4-1.200 4.300-1.500 5.500-5.500z" fill="url(#spk)" />
          <path d="M5.500 16l1 3 3.300.5-2.500 2.200.2 3.300-2.800-1.700-3 1 .8-3L.5 19l3.300-.5z" fill="#12a0f0" />
          <circle cx="40.500" cy="3" r="2" fill="#ef5a28" /><circle cx="59" cy="22.500" r="2" fill="#8ccf3c" />
        </svg>
      </div>
      {APPS.map(([name, state, icon]) => (
        <button key={name} aria-label={name} className="flex w-[49px] shrink-0 flex-col items-center">
          <span className="flex flex-1 items-center">{icon}</span>
          {state === 'full' && <span className="h-0.5 w-10 bg-[#0a78d4]" />}
          {state === 'split' && <span className="h-0.5 w-10 border-r-8 border-[#5aa9e6] bg-[#0a78d4]" />}
          {state === 'none' && <span className="h-0.5 w-10" />}
        </button>
      ))}

      <div className="ml-auto flex items-center">
        <button className="mr-3.5 flex items-center text-[14px] leading-5 whitespace-nowrap">
          <svg viewBox="0 0 26 24" className="mr-[7px] h-6 w-[26px]">
            <defs><linearGradient id="cl" x1="0" y1="0" x2="0" y2="1"><stop stopColor="#c4dcfa" /><stop offset="1" stopColor="#6ea2ee" /></linearGradient></defs>
            <path d="M11 2c-1 5 2 9 7 9-2 4-7 5-10 3s-3-3-7-3c3-2 4-2 6-3s4-3 4-6z" fill="#f7a21b" />
            <path d="M6 23a5.500 5.500 0 0 1 0-11c1-3 4-4.500 7-4s4.500 2 5 4.500c4 0 7 2 7 5.500 0 3-2 5-5 5z" fill="url(#cl)" />
            <circle cx="19" cy="6" r="6" fill="#c4281c" /><text x="19" y="9.500" textAnchor="middle" fontSize="9" fontWeight="700" fontFamily="Open Sans" fill="#fff">6</text>
          </svg>
          <span className="mr-[9px]">25°C</span><span>Mostly cloudy</span>
        </button>
        <div className="flex items-center">
          <button aria-label="Hidden icons" className="flex w-6 justify-center"><svg viewBox="0 0 12 7" className="h-[7px] w-3" fill="none" stroke="#111" strokeWidth="1.300"><path d="M.5 6.500L6 1l5.500 5.500" /></svg></button>
          <button aria-label="Meet now" className="flex w-6 justify-center"><svg viewBox="0 0 12 16" className="h-4 w-3" fill="none" stroke="#111" strokeWidth="1.200"><path d="M2 2c3-1.500 5-1.500 8 0M2 14c3 1.500 5 1.500 8 0" /><rect x="0.600" y="4.500" width="7.500" height="7" rx="1.500" /><path d="M8.500 7l2.500-1.500v5L8.500 9" /></svg></button>
          <button aria-label="Battery" className="flex w-6 justify-center"><svg viewBox="0 0 16 12" className="h-3 w-4" fill="none" stroke="#111" strokeWidth="1.200"><path d="M6.500 3H14v7H5.500M14.500 5h1v3h-1M1.500 0v2M4.500 0v2M.6 2.500h5v2c0 1.500-1 2-2.500 2s-2.500-.5-2.500-2zM3 6.500V10h3" /></svg></button>
          <button aria-label="Speakers" className="flex w-6 justify-center"><svg viewBox="0 0 16 14" className="h-3.5 w-4" fill="none" stroke="#111" strokeWidth="1.100"><path d="M.6 5h2L6 2v10L2.600 9h-2zM8 5c1 1.200 1 2.800 0 4M10 3.500c2 2 2 5 0 7" /><path d="M12 2c3 3 3 7 0 10" /><path d="M14 .5c3 3.500 3 9.500 0 13" stroke="#999" /></svg></button>
          <button aria-label="Network" className="flex w-[26px] justify-center"><svg viewBox="0 0 16 14" className="h-3.5 w-4" fill="none" stroke="#111" strokeWidth="1.200"><path d="M6 2.500h9.400v7.500H5M10 10v3M7 13.400h6M.6 1h4.500v4H.6zM2.800 5v8.400" /></svg></button>
          <button aria-label="Touch keyboard" className="flex w-[30px] justify-center"><svg viewBox="0 0 24 13" className="h-[13px] w-6" fill="none" stroke="#111" strokeWidth="1.100"><rect x="0.600" y="0.600" width="22.800" height="11.800" /><path d="M3 4h18M3 6.500h18" strokeDasharray="1.500 1.300" /><path d="M3 9.500h2m2 0h10m2 0h2" /></svg></button>
        </div>
        <button className="ml-2 text-[12px] leading-4">ENG</button>
        <div className="ml-2.5 w-[60px] text-center text-[12px] leading-[18px] whitespace-nowrap"><div>00:34</div><div>09-07-2026</div></div>
        <button aria-label="Notifications, 2 new" className="ml-[17px] flex">
          <svg viewBox="0 0 24 26" className="h-[26px] w-6">
            <path d="M0 2h16v13H8l-4 4v-4H0z" fill="#111" /><path d="M3 5.500h10M3 8.500h10M3 11.500h7" stroke="#d0d4dc" />
            <circle cx="15.500" cy="17" r="7.800" fill="#d5d7dd" stroke="#777" /><text x="15.500" y="21" textAnchor="middle" fontSize="11" fontWeight="600" fontFamily="Open Sans" fill="#111">2</text>
          </svg>
        </button>
        <span className="mr-1 ml-3 h-10 w-px bg-[#a9adb5]" />
      </div>
    </footer>
  );
}

export default function App() {
  return (
    <div className="flex h-screen flex-col overflow-hidden">
      <TitleBar />
      <MenuBar />
      <KaliPanel />
      <TabBar />
      <NavToolbar />
      <BookmarksBar />
      <Dashboard />
      <StatusBar />
      <Taskbar />
    </div>
  );
}
